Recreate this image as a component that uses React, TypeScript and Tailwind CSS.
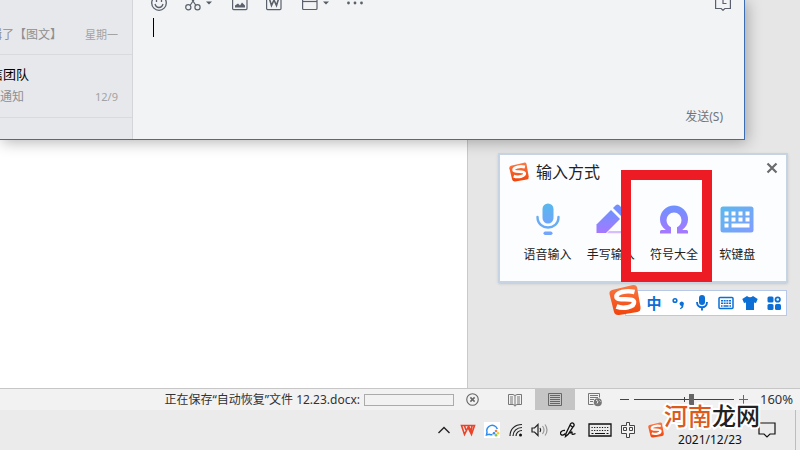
import type { ReactNode } from "react";

const ICON_BLUE = "#0b6fd6";

const SogouLogo = ({ className }: { className: string }) => (
  <svg viewBox="0 0 32 32" className={className} aria-hidden="true">
    <defs>
      <linearGradient id="sogou" x1="0" y1="0" x2="0" y2="1">
        <stop offset="0" stopColor="#fb7a43" />
        <stop offset="1" stopColor="#f1430c" />
      </linearGradient>
    </defs>
    <path
      d="M3 6 L24 1 Q27 0.5 28 3 L31.500 23 Q32 27 28.500 28 L10 31 Q6 31.500 5 28 L0.500 10 Q0 7 3 6Z"
      fill="url(#sogou)"
    />
    <path
      d="M25.500 8 C17 6 7 8.500 7.500 13 C8 17.500 24.500 13 25 18 C25.500 23.500 14 25 7.500 22.500"
      fill="none"
      stroke="#fff"
      strokeWidth="4.600"
    />
  </svg>
);

const Caret = () => (
  <svg viewBox="0 0 6 4" className="h-1 w-1.5" aria-hidden="true">
    <path d="M0 0.500h6L3 3.500z" fill="#555b66" />
  </svg>
);

const ChatToolbar = () => (
  <div className="-mt-[5px] flex h-4 items-center pr-[13px] pl-[18px] text-[#5b616c]">
    <button aria-label="表情" className="mr-[18px]">
      <svg viewBox="0 0 16 16" className="size-4" fill="none" stroke="currentColor" strokeWidth="1.300">
        <circle cx="8" cy="8" r="7.300" />
        <path d="M4 9q1 3.500 4 3.500T12 9M5.500 5v2M10.500 5v2" />
      </svg>
    </button>
    <button aria-label="截图" className="mr-5 flex items-center gap-[5px]">
      <svg viewBox="0 0 16 16" className="size-4" fill="none" stroke="currentColor" strokeWidth="1.200">
        <circle cx="3.300" cy="12.300" r="2.600" />
        <circle cx="12.500" cy="12.300" r="2.600" />
        <path d="M4.500 1l6.500 9.500M11.500 1L5 10.500" />
      </svg>
      <Caret />
    </button>
    <button aria-label="图片" className="mr-[18px]">
      <svg viewBox="0 0 16 16" className="size-4" fill="none" stroke="currentColor" strokeWidth="1.200">
        <rect x="0.600" y="0.600" width="14.400" height="14" rx="1" />
        <path d="M3 12.500v-2l3-2 2 2 2-3 3 3v2z" fill="currentColor" stroke="none" />
      </svg>
    </button>
    <button aria-label="文档" className="mr-5">
      <svg viewBox="0 0 16 16" className="size-4" fill="none" stroke="currentColor" strokeWidth="1.200">
        <rect x="0.600" y="0.600" width="14.400" height="14" rx="1" />
        <path d="M3.500 4l2 6.500L8 5l2.500 5.500L12.500 4" strokeWidth="1.600" />
      </svg>
    </button>
    <button aria-label="窗口" className="mr-[18px] flex items-center gap-[5px]">
      <svg viewBox="0 0 16 16" className="size-4" fill="none" stroke="currentColor" strokeWidth="1.200">
        <rect x="0.600" y="1" width="14.400" height="13.500" rx="1" />
        <path d="M1 6.500h14" />
      </svg>
      <Caret />
    </button>
    <button aria-label="更多">
      <svg viewBox="0 0 16 16" className="size-4" fill="currentColor">
        <circle cx="1.500" cy="8" r="1.400" />
        <circle cx="8" cy="8" r="1.400" />
        <circle cx="14.500" cy="8" r="1.400" />
      </svg>
    </button>
    <button aria-label="聊天记录" className="ml-auto">
      <svg viewBox="0 0 16 16" className="size-4" fill="none" stroke="currentColor" strokeWidth="1.200">
        <path d="M0.600 0v13.500h5.600l1.800 1.800 1.800-1.800h5.600V0M8 4v4.500h3.500" />
      </svg>
    </button>
  </div>
);

const ChatWindow = () => (
  <section className="absolute top-0 left-0 flex w-[745px] overflow-hidden border-r border-b border-[#3b6db1] bg-[#f1f3f5] shadow-[2px_2px_14px_rgba(0,0,0,0.3)]">
    <ul className="w-[133px] shrink-0 border-r border-[#d3d5d9] bg-[#e7e8ec] text-xs text-[#8f8f8f]">
      <li className="flex h-[55px] items-end justify-between border-b border-[#d9dadf] pr-3.5 pb-[11px]">
        <span className="-ml-[10px] whitespace-nowrap">辑了【图文】</span>
        <time className="text-[11px] text-[#a3a3a3]">星期一</time>
      </li>
      <li className="h-[63px] border-b border-[#d9dadf] pt-[9px] pr-3.5">
        <p className="-ml-[10px] text-[13px] leading-5 text-black">信团队</p>
        <p className="mt-[3px] flex items-center justify-between leading-5">
          <span>通知</span>
          <time className="text-[11px] text-[#a3a3a3]">12/9</time>
        </p>
      </li>
      <li className="h-[21px]" />
    </ul>
    <div className="flex min-w-0 flex-1 flex-col">
      <ChatToolbar />
      <div className="relative flex-1">
        <textarea aria-label="消息" className="size-full resize-none px-5 py-1.5 text-[13px] outline-none" />
        <span className="absolute top-[7px] left-5 h-[19px] w-px bg-black" />
      </div>
      <button className="mr-[21px] mb-3 self-end text-xs leading-5 text-[#6f757d]">发送(S)</button>
    </div>
  </section>
);

const Method = ({ label, children }: { label: string; children: ReactNode }) => (
  <button className="flex flex-col items-center gap-[9px] text-xs leading-5 whitespace-nowrap text-[#222]">
    <svg viewBox="0 0 34 34" className="size-[34px]" aria-hidden="true">
      {children}
    </svg>
    {label}
  </button>
);

const InputPanel = () => (
  <section className="absolute top-[153px] left-[498px] w-[290px] border-2 border-[#c6d3e2] bg-[#fcfdff] pb-4 shadow-sm">
    <svg className="absolute size-0" aria-hidden="true">
      <defs>
        <linearGradient id="sky" x1="0" y1="0" x2="0" y2="1">
          <stop offset="0" stopColor="#58b8ec" />
          <stop offset="1" stopColor="#6fa5fb" />
        </linearGradient>
        <linearGradient id="violet" x1="0" y1="0" x2="0" y2="1">
          <stop offset="0" stopColor="#6e93ff" />
          <stop offset="1" stopColor="#a678ff" />
        </linearGradient>
        <linearGradient id="keys" x1="0" y1="0" x2="1" y2="1">
          <stop offset="0" stopColor="#5ab9ee" />
          <stop offset="1" stopColor="#829cff" />
        </linearGradient>
      </defs>
    </svg>
    <header className="flex items-center pt-[3px] pr-2 pl-[9px]">
      <SogouLogo className="size-5" />
      <h2 className="ml-[7px] text-base leading-7 text-[#222]">输入方式</h2>
      <button aria-label="关闭" className="mb-2 ml-auto">
        <svg viewBox="0 0 12 12" className="size-3">
          <path d="M1.500 1.500l9 9M10.500 1.500l-9 9" stroke="#6b6b6b" strokeWidth="2.200" />
        </svg>
      </button>
    </header>
    <div className="mt-4 grid grid-cols-4 pr-[17px] pl-4">
      <Method label="语音输入">
        <rect x="11.500" y="1.500" width="11" height="20" rx="5.500" fill="url(#sky)" />
        <path d="M6.500 15c0 14 21 14 21 0" fill="none" stroke="#68acf5" strokeWidth="2.400" strokeLinecap="round" />
        <rect x="12.500" y="29.500" width="9" height="3.500" rx="1.700" fill="#72a5fb" />
      </Method>
      <Method label="手写输入">
        <path d="M2.500 31v-8.500L17 8l9 9-14 14z" fill="url(#violet)" />
        <path d="M19 6l3-3q1.500-1 3 0l6 6q1 1.500 0 3l-3 3z" fill="#758fff" />
        <path d="M15 29h16v2.300H13z" fill="#d5bdff" />
      </Method>
      <Method label="符号大全">
        <path
          d="M3 31.500v-2q0-1.500 1.500-1.500h4.300C5 25 3 21.500 3 17.500a14 14 0 0 1 28 0c0 4-2 7.500-5.800 10.500h4.300q1.500 0 1.500 1.500v2H20v-6.200c3-1.500 4.500-4 4.500-7.300a7.500 7.500 0 0 0-15 0c0 3.300 1.500 5.800 4.500 7.300v6.200z"
          fill="url(#violet)"
        />
      </Method>
      <Method label="软键盘">
        <rect x="0.500" y="4.500" width="33" height="26" rx="2.500" fill="url(#keys)" />
        <path
          d="M4.500 9.500h4v4h-4zM11.500 9.500h4v4h-4zM18.500 9.500h4v4h-4zM25.500 9.500h4v4h-4zM4.500 15.500h4v4h-4zM11.500 15.500h4v4h-4zM18.500 15.500h4v4h-4zM25.500 15.500h4v4h-4zM4.500 21.500h4v4h-4zM11.500 21.500h18v4h-18z"
          fill="#fff"
        />
      </Method>
    </div>
  </section>
);

const ImeBar = () => (
  <section className="absolute top-[284px] left-[609px] flex w-[178px] items-end">
    <SogouLogo className="z-10 size-8" />
    <div className="-ml-4 flex flex-1 items-center border border-[#b7c9e6] bg-white py-1 pl-4">
      <button className="w-6 text-[15px] leading-4 font-bold text-[#0b6fd6]">中</button>
      <button aria-label="标点" className="flex w-6 justify-center">
        <svg viewBox="0 0 16 16" className="size-4">
          <circle cx="5" cy="5.500" r="1.800" fill="none" stroke={ICON_BLUE} strokeWidth="1.600" />
          <path d="M9.500 8.500a2.200 2.200 0 1 1 4 1.500c0 2-1 3.700-3.200 4.200l-.3-1q1.500-.7 1.600-2.200-2-.5-2.100-2.500z" fill={ICON_BLUE} />
        </svg>
      </button>
      <button aria-label="语音" className="flex w-6 justify-center">
        <svg viewBox="0 0 16 16" className="size-4">
          <rect x="5" y="0" width="6" height="10" rx="3" fill={ICON_BLUE} />
          <path d="M3 7c0 7 10 7 10 0M8 12v3.500" fill="none" stroke={ICON_BLUE} strokeWidth="1.900" />
        </svg>
      </button>
      <button aria-label="软键盘" className="flex w-6 justify-center">
        <svg viewBox="0 0 16 16" className="size-4">
          <rect x="1" y="2.500" width="14" height="11" rx="1" fill="none" stroke={ICON_BLUE} strokeWidth="1.500" />
          <path d="M3 5.700h10M3 8.300h10" stroke={ICON_BLUE} strokeWidth="1.600" strokeDasharray="2 0.670" />
          <path d="M3 11h1.500M5.500 11h5M11.500 11H13" stroke={ICON_BLUE} strokeWidth="1.500" />
        </svg>
      </button>
      <button aria-label="皮肤" className="flex w-6 justify-center">
        <svg viewBox="0 0 16 16" className="size-4">
          <path d="M5 1q3 2.500 6 0l4.700 3-1.700 4-2-.5V15H4V7.500L2 8 .3 4z" fill={ICON_BLUE} />
        </svg>
      </button>
      <button aria-label="工具箱" className="flex w-6 justify-center">
        <svg viewBox="0 0 16 16" className="size-4" fill={ICON_BLUE}>
          <rect x="1.500" y="1.500" width="6" height="6" rx="1.500" />
          <circle cx="11.700" cy="4.500" r="2.200" fill="none" stroke={ICON_BLUE} strokeWidth="1.800" />
          <rect x="1.500" y="9" width="6" height="6" rx="1.500" />
          <rect x="9" y="9" width="6" height="6" rx="1.500" />
        </svg>
      </button>
    </div>
  </section>
);

const StatusBar = () => (
  <div className="flex h-[22px] items-center justify-end border-t border-[#c6c6c6] bg-[#f2f2f2] pr-2 text-xs text-[#333]">
    <span id="saving" className="mr-1">正在保存“自动恢复”文件 12.23.docx:</span>
    <div role="progressbar" aria-labelledby="saving" className="h-3 w-[90px] border border-[#ababab]" />
    <button aria-label="取消" className="mr-4 ml-3">
      <svg viewBox="0 0 14 14" className="size-[13px]" fill="none" stroke="#666" strokeWidth="1.200">
        <circle cx="7" cy="7" r="6.200" />
        <path d="M4.700 4.700l4.600 4.600M9.300 4.700L4.700 9.300" strokeWidth="1.600" />
      </svg>
    </button>
    <button aria-label="阅读视图" className="flex h-full w-10 items-center justify-center">
      <svg viewBox="0 0 14 14" className="size-3.5" fill="none" stroke="#777">
        <path d="M7 2.500L5 1.500H.5v10H5l2 1 2-1h4.500v-10H9zM7 2.500v11M2 4h3M2 6h3M2 8h3M2 10h3M9 4h3M9 6h3M9 8h3M9 10h3" />
      </svg>
    </button>
    <button aria-label="页面视图" className="flex h-full w-10 items-center justify-center bg-[#c5c5c5]">
      <svg viewBox="0 0 14 14" className="size-3.5" fill="none" stroke="#666">
        <path d="M.5.500h13v12H.5zM2 2.500h10M2 4.500h10M2 6.500h10M2 8.500h10M2 10.500h10" />
      </svg>
    </button>
    <button aria-label="Web 版式" className="flex h-full w-10 items-center justify-center">
      <svg viewBox="0 0 14 14" className="size-3.5" fill="none" stroke="#777">
        <path d="M5.500 11.500h-5v-11h11v4M2 2.500h8M2 4.500h8M2 6.500h4M2 8.500h3" />
        <circle cx="9.800" cy="9.300" r="4" fill="#777" stroke="none" />
        <path d="M8 7l2 1.500-1 2M11.500 7.500l1 1" stroke="#eee" />
      </svg>
    </button>
    <button aria-label="缩小" className="ml-[5px]">
      <svg viewBox="0 0 9 9" className="size-[9px]"><path d="M0 4.500h9" stroke="#444" /></svg>
    </button>
    <div className="relative mx-[5px] flex w-[100px] items-center">
      <span className="absolute left-1/2 h-[5px] w-px bg-[#444]" />
      <input
        type="range"
        aria-label="显示比例"
        min={0}
        max={100}
        defaultValue={58}
        className="relative h-3 w-full appearance-none bg-transparent bg-[linear-gradient(#444,#444)] bg-[length:100%_1px] bg-center bg-no-repeat [&::-webkit-slider-thumb]:h-[11px] [&::-webkit-slider-thumb]:w-[5px] [&::-webkit-slider-thumb]:appearance-none [&::-webkit-slider-thumb]:bg-[#666]"
      />
    </div>
    <button aria-label="放大">
      <svg viewBox="0 0 9 9" className="size-[9px]"><path d="M0 4.500h9M4.500 0v9" stroke="#666" /></svg>
    </button>
    <span className="ml-3 w-8 text-right text-[13px]">160%</span>
  </div>
);

const tray = "flex h-full w-6 items-center justify-center";
const trayWide = "flex h-full w-8 items-center justify-center";

const Taskbar = () => (
  <footer className="relative flex h-10 items-center justify-end bg-[#ebebeb] pr-1 text-xs text-[#111]">
    <button aria-label="显示隐藏的图标" className={tray}>
      <svg viewBox="0 0 12 8" className="h-2 w-3"><path d="M.5 7L6 1.500 11.500 7" fill="none" stroke="#222" strokeWidth="1.400" /></svg>
    </button>
    <button aria-label="WPS" className={tray}>
      <svg viewBox="0 0 16 14" className="h-3.5 w-4">
        <path d="M1.500 2.500h13l-3 9L8 4.500l-3.500 7zM4.500 3L6 7M8.500 3l2.500 5L12 3" fill="none" stroke="#e9432a" strokeWidth="1.600" />
      </svg>
    </button>
    <button aria-label="企业微信" className={tray}>
      <svg viewBox="0 0 16 16" className="size-4 bg-white" fill="none">
        <path d="M8.500 12.500Q6.500 13 5 12.300L2.500 13l.5-2.500A5.300 5.300 0 1 1 13.300 7" stroke="#2f8df0" strokeWidth="1.500" />
        <circle cx="12" cy="9" r="1.300" fill="#fb7b37" />
        <circle cx="10" cy="11.200" r="1.300" fill="#2f8df0" />
        <circle cx="14" cy="11.200" r="1.300" fill="#ffc928" />
        <circle cx="12" cy="13.300" r="1.300" fill="#78c943" />
      </svg>
    </button>
    <button aria-label="网络" className={tray}>
      <svg viewBox="0 0 14 14" className="size-3.5" fill="none" stroke="#222" strokeWidth="1.200">
        <path d="M1 13C1 6 6 1.500 13 1.500M4 13c0-5 4-8.500 9-8.500M7 13c0-3 2.500-5.500 6-5.500" />
        <circle cx="11.500" cy="12" r="1.500" fill="#111" stroke="none" />
      </svg>
    </button>
    <button aria-label="音量" className={tray}>
      <svg viewBox="0 0 18 14" className="h-3.5 w-[18px]" fill="none" stroke="#222" strokeWidth="1.200">
        <path d="M1 5h2.500L7 1.500v11L3.500 9H1z" />
        <path d="M9 5q1.500 2 0 4" />
        <path d="M11.500 3q3 4 0 8M14 1.500q4 5.500 0 11" stroke="#999" />
      </svg>
    </button>
    <button aria-label="手写笔" className={trayWide}>
      <svg viewBox="0 0 16 16" className="size-4" fill="none" stroke="#111" strokeWidth="1.300">
        <path d="M5.500 14.500L6 11.500 10.500 2q1.500-2 3-.5T13 5L8 12.500zM10.500 3.500l2 1.500" />
        <path d="M5 8.500C1.500 8-.5 11 1 12.500s3 .5 4.500-1M9.500 11.500q3-3 2.500-.5t3.500.5" />
      </svg>
    </button>
    <button aria-label="触摸键盘" className={trayWide}>
      <svg viewBox="0 0 24 14" className="h-3.5 w-6" fill="none" stroke="#111">
        <path d="M1 1h22v12H1z" strokeWidth="1.300" />
        <path d="M3.500 4.500h17M3.500 7.500h17" strokeWidth="1.200" strokeDasharray="1.200 1.400" />
        <path d="M3.500 10.500h2M7 10.500h10M18.500 10.500h2" />
      </svg>
    </button>
    <button aria-label="中文输入" className={tray}>
      <svg viewBox="0 0 14 16" className="h-4 w-3.5" fill="none" stroke="#444">
        <path d="M5.500 3.500v-3h3v3h5v8h-5v4h-3v-4h-5v-8z" fill="#f4f4f4" />
        <path d="M2.500 5.500h3v3h-3zM8.500 5.500h3v3h-3z" />
      </svg>
    </button>
    <button aria-label="搜狗输入法" className={trayWide}>
      <SogouLogo className="size-4" />
    </button>
    <time className="w-[76px] pt-[19px] text-center leading-5">2021/12/23</time>
    <button aria-label="通知" className="flex h-full w-[38px] items-center justify-center">
      <svg viewBox="0 0 18 16" className="h-4 w-[18px]" fill="none" stroke="#111" strokeWidth="1.200">
        <path d="M1 1h16v11h-5l-3 3-3-3H1z" />
      </svg>
    </button>
    <span className="ml-[9px] h-full w-px bg-[#bdbdbd]" />
    <strong className="absolute right-10 bottom-5 text-2xl leading-7 font-medium whitespace-nowrap text-[#222] [paint-order:stroke_fill] [-webkit-text-stroke:4px_white]">
      <span className="text-[#dc5a1c]">河南</span>龙网
    </strong>
  </footer>
);

const App = () => (
  <div className="flex min-h-screen flex-col overflow-hidden bg-[#e6e6e6] font-['Noto_Sans','Noto_Sans_CJK_SC',sans-serif]">
    <main className="relative flex flex-1">
      <div className="w-[468px] border-r border-[#c9c9c9] bg-white" />
      <ChatWindow />
      <InputPanel />
      <ImeBar />
      <div className="pointer-events-none absolute top-[170px] left-[621px] h-28 w-[91px] border-10 border-[#ed1c24]" />
    </main>
    <StatusBar />
    <Taskbar />
  </div>
);

export default App;
